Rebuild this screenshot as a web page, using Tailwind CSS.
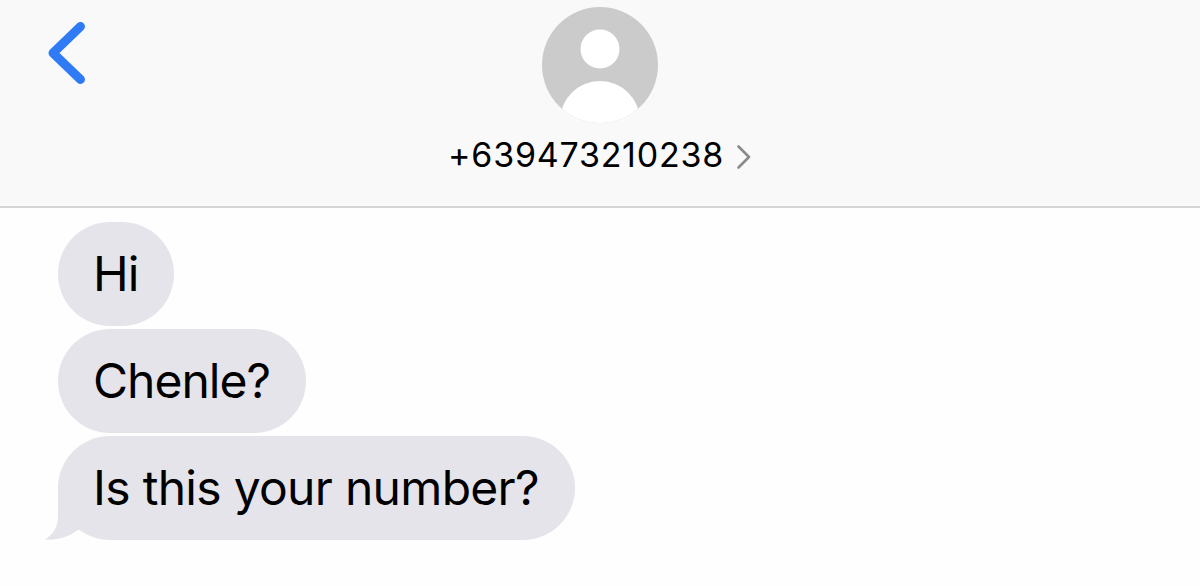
<!DOCTYPE html>
<html lang="en">
<head>
  <meta charset="UTF-8">
  <meta name="viewport" content="width=device-width, initial-scale=1.0">
  <title>Messages</title>
  <script src="https://cdn.jsdelivr.net/npm/@tailwindcss/browser@4"></script>
</head>
<body class="h-screen overflow-hidden bg-[#fefefe] font-['Inter',sans-serif] text-black">

  <!-- Conversation header -->
  <header class="grid grid-cols-[1fr_auto_1fr] h-52 border-b-2 border-[#d5d5d7] bg-[#f9f9f9]">
    <button class="justify-self-start self-start mt-[21px] ml-12" aria-label="Back">
      <svg class="block" width="38" height="64" viewBox="0 0 38 64" fill="none" stroke="#2f7af5" stroke-width="9" stroke-linecap="round" stroke-linejoin="round">
        <path d="M32.5 5.5 5 32l27.5 26.5"></path>
      </svg>
    </button>

    <div class="flex flex-col items-center pt-[7px]">
      <!-- Avatar placeholder -->
      <svg class="block" width="116" height="116" viewBox="0 0 116 116">
        <clipPath id="avatar"><circle cx="58" cy="58" r="58"></circle></clipPath>
        <g clip-path="url(#avatar)">
          <rect width="116" height="116" fill="#cbcbcb"></rect>
          <circle cx="58" cy="42" r="19.5" fill="#fff"></circle>
          <circle cx="58" cy="114" r="40" fill="#fff"></circle>
        </g>
      </svg>
      <div class="flex items-center mt-3 h-10">
        <span class="text-[34px] leading-10 tracking-[0.75px]">+639473210238</span>
        <svg class="block ml-3 mt-1" width="16" height="26" viewBox="0 0 16 26" fill="none" stroke="#8a8a8e" stroke-width="2.6" stroke-linecap="round" stroke-linejoin="round">
          <path d="M2.5 2.5 13 13 2.5 23.5"></path>
        </svg>
      </div>
    </div>
  </header>

  <!-- Messages -->
  <main class="flex flex-col items-start gap-[3px] pt-3.5 pl-[58px] text-[48px] leading-[104px]">
    <div class="w-[116px] h-[104px] pl-[35px] rounded-[52px] bg-[#e5e4eb] tracking-[-1px] whitespace-nowrap">Hi</div>
    <div class="w-[248px] h-[104px] pl-[35px] rounded-[52px] bg-[#e5e4eb] tracking-[-1px] whitespace-nowrap">Chenle?</div>
    <div class="relative w-[517px] h-[104px] pl-[35px] rounded-[52px] bg-[#e5e4eb] tracking-[-0.7px] whitespace-nowrap">
      <svg class="absolute -left-3.5 bottom-0" width="50" height="54" viewBox="0 0 50 54" fill="#e5e4eb">
        <path d="M14 0V30C14 41 9 49 .5 53.5 13 54.5 25 51 34.5 43.5L50 30V0Z"></path>
      </svg>
      <span class="relative">Is this your number?</span>
    </div>
  </main>

</body>
</html>
